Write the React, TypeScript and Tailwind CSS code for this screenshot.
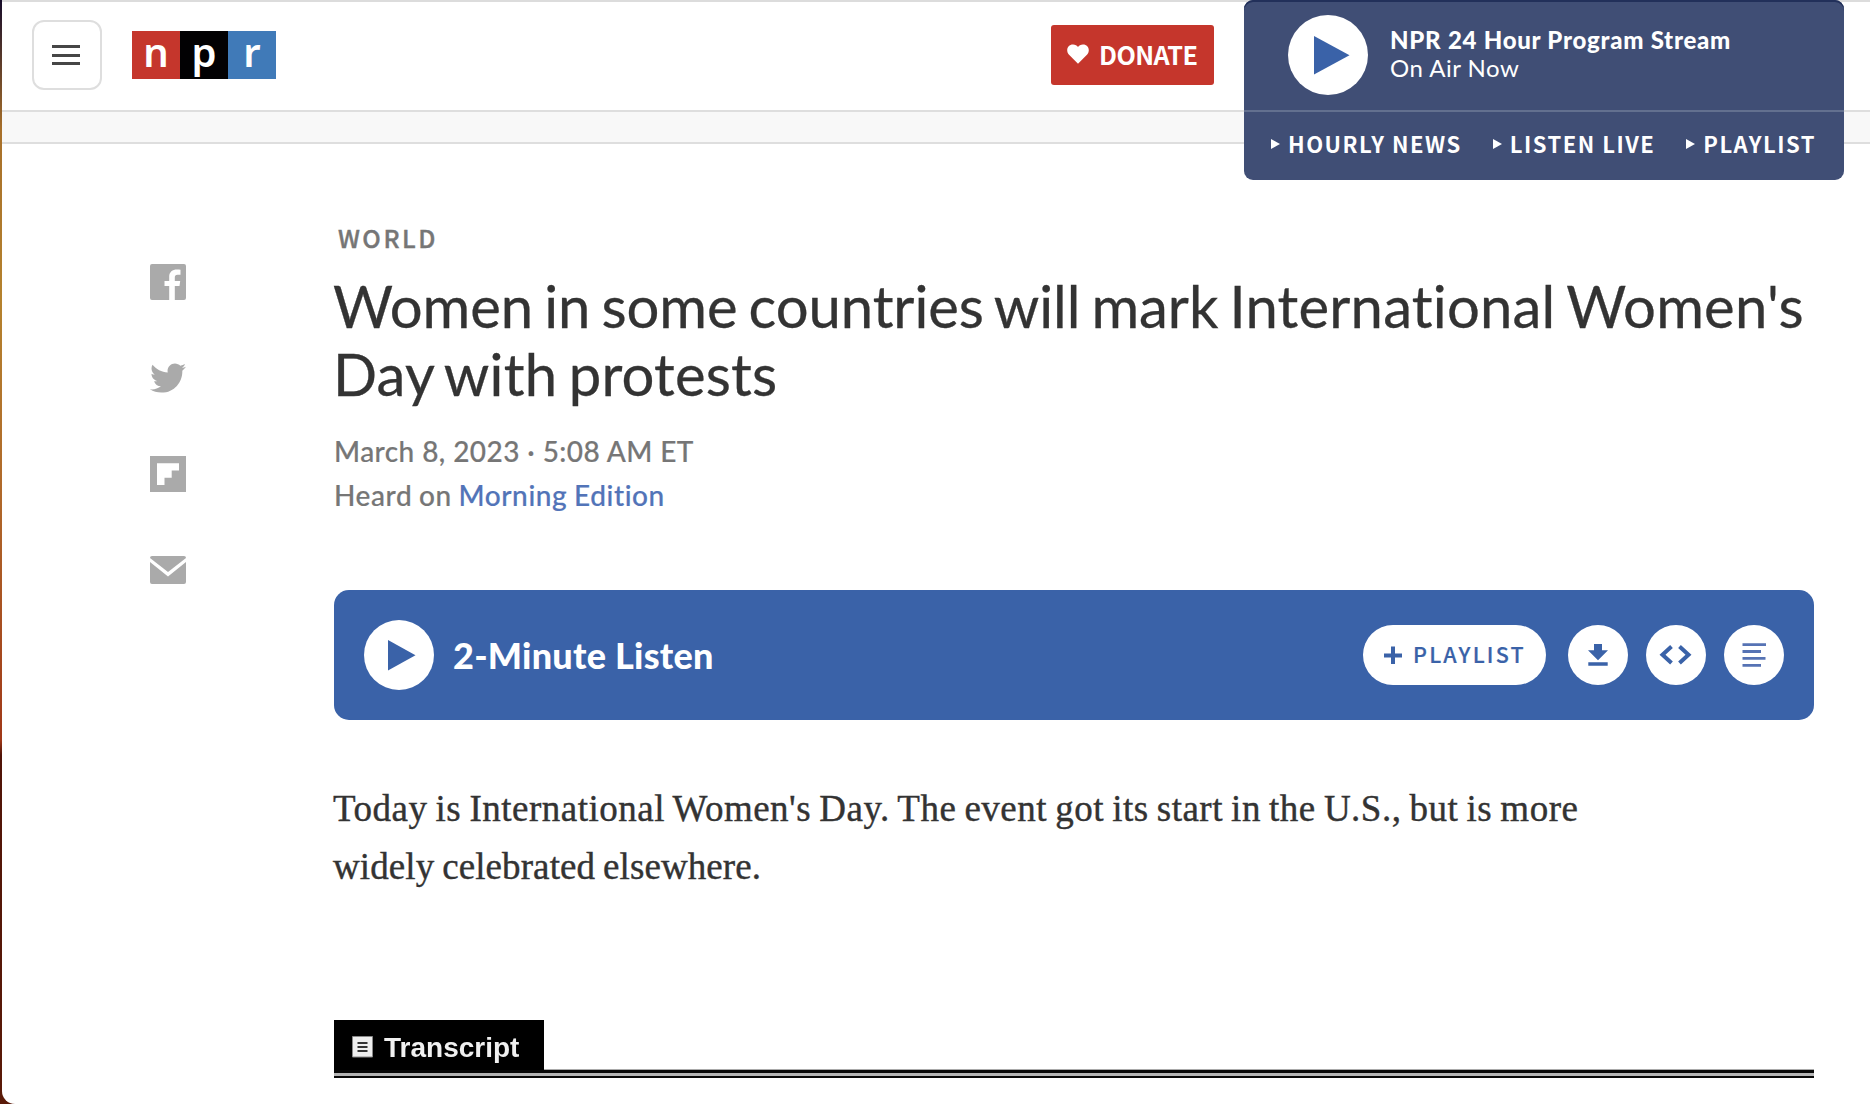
import React from "react";
import { FaTwitter } from "react-icons/fa";

const navLinks = ["HOURLY NEWS", "LISTEN LIVE", "PLAYLIST"];

const logoTiles = [
  { letter: "n", tile: "bg-[#c5362c]" },
  { letter: "p", tile: "bg-[#020103]" },
  { letter: "r", tile: "bg-[#407ab8]" },
];

function Logo() {
  return (
    <div className="ml-[30px] flex h-[48px] font-['Noto_Sans'] text-[40px] font-semibold leading-[48px] text-white">
      {logoTiles.map(({ letter, tile }) => (
        <span key={letter} className={`${tile} flex w-[48px] justify-center`}>
          <span className="relative top-[-3px]">{letter}</span>
        </span>
      ))}
    </div>
  );
}

function StreamPlayer() {
  return (
    <section className="absolute left-[1242px] top-0 h-[180px] w-[600px] overflow-hidden rounded-[9px] bg-[#404e75] text-white shadow-[inset_0_2px_0_#22305a]">
      <div className="flex h-[112px] items-start border-b-2 border-[#63708f] pl-[44px] pt-[15px]">
        <button className="size-[80px] rounded-full bg-white">
          <svg viewBox="0 0 80 80" className="size-[80px]">
            <path d="M26 21 L61.500 40.300 L26 59.500 Z" fill="#3a62a8" />
          </svg>
        </button>
        <div className="ml-[22px] pt-[11px] font-['Lato',sans-serif] text-[24px] leading-[28px]">
          <p className="font-black tracking-[0.75px]">NPR 24 Hour Program Stream</p>
          <p className="tracking-[0.5px]">On Air Now</p>
        </div>
      </div>
      <nav className="flex gap-[31px] whitespace-nowrap pl-[27px] pt-[15px] font-['Noto_Sans_CJK_SC',sans-serif] text-[22px] font-bold leading-[32px] tracking-[1.5px]">
        {navLinks.map((label) => (
          <a key={label} className="flex items-center">
            <svg viewBox="0 0 9 10" className="mr-[8px] mt-[1px] h-[10px] w-[9px]">
              <path d="M0 0 L9 5 L0 10 Z" fill="#fff" />
            </svg>
            {label}
          </a>
        ))}
      </nav>
    </section>
  );
}

function Header() {
  return (
    <header className="relative">
      <div className="flex h-[112px] items-center border-b-2 border-t-2 border-b-[#dedede] border-t-[#dcdcdc] pb-[2px] pl-[30px]">
        <button className="flex size-[70px] flex-col items-center justify-center gap-[5.500px] rounded-[12px] border-2 border-[#dedede] pr-[2px]">
          <span className="h-[3px] w-[28px] bg-[#464646]" />
          <span className="h-[3px] w-[28px] bg-[#464646]" />
          <span className="h-[3px] w-[28px] bg-[#464646]" />
        </button>
        <Logo />
        <button className="ml-[775px] flex h-[60px] w-[163px] items-center rounded-[3px] bg-[#c5362c] pb-[2px] pl-[16px] font-['Noto_Sans_CJK_SC',sans-serif] text-[25.2px] font-bold leading-[32px] tracking-[-0.55px] text-white">
          <svg viewBox="0 0 22 20" className="mr-[10px] h-[20px] w-[22px]">
            <path d="M11 19.800 L1.800 10.500 C-1.500 6.500 .5 .5 6 .5 C8.300 .5 10 1.500 11 3 C12 1.500 13.700 .5 16 .5 C21.500 .5 23.500 6.500 20.200 10.500 Z" fill="#fff" />
          </svg>
          DONATE
        </button>
      </div>
      <div className="h-[32px] border-b-2 border-[#dedede] bg-[#f8f8f8]" />
      <StreamPlayer />
    </header>
  );
}

function ShareRail() {
  return (
    <aside className="flex w-[332px] shrink-0 flex-col gap-[60px] pl-[148px] pt-[120px] text-[#aaaaaa]">
      <svg viewBox="0 0 36 36" className="size-[36px]">
        <path
          fill="currentColor"
          d="M2 0 H34 Q36 0 36 2 V34 Q36 36 34 36 H24.800 V22 H29.500 L30.200 17 H24.800 V13.500 C24.800 11.600 25.600 10.700 27.600 10.700 H30.500 V5.700 C29.500 5.500 28.500 5.400 27 5.400 C22.500 5.400 19.200 8 19.200 12.500 V17 H14.500 V22 H19.200 V36 H2 Q0 36 0 34 V2 Q0 0 2 0 Z"
        />
      </svg>
      <FaTwitter className="size-[36px]" />
      <svg viewBox="0 0 36 36" className="size-[36px]">
        <path fill="currentColor" fillRule="evenodd" d="M0 0 H36 V36 H0 Z M7 7.200 V29 H14.500 V21.800 H21.700 V14.500 H29 V7.200 Z" />
      </svg>
      <svg viewBox="0 0 36 36" className="size-[36px]">
        <path fill="currentColor" d="M2 4 H34 Q36 4 36 6 L18 20 L0 6 Q0 4 2 4 Z" />
        <path fill="currentColor" d="M0 10 L18 24.500 L36 10 V30 Q36 32 34 32 H2 Q0 32 0 30 Z" />
      </svg>
    </aside>
  );
}

function RoundButton({ children }: { children: React.ReactNode }) {
  return (
    <button className="size-[60px] rounded-full bg-white text-[#3a62a8]">
      <svg viewBox="0 0 60 60" className="size-[60px]">
        {children}
      </svg>
    </button>
  );
}

function AudioBar() {
  return (
    <section className="mt-[73px] flex h-[130px] w-[1480px] items-center rounded-[15px] bg-[#3a62a8] px-[30px]">
      <button className="size-[70px] rounded-full bg-white">
        <svg viewBox="0 0 70 70" className="size-[70px]">
          <path d="M24 20 L51.500 35.300 L24 50.500 Z" fill="#3a62a8" />
        </svg>
      </button>
      <h2 className="ml-[19px] font-['Lato',sans-serif] text-[36px] font-black leading-[44px] tracking-[0.25px] text-white">
        2-Minute Listen
      </h2>
      <div className="ml-auto flex items-center gap-[18px]">
        <button className="mr-[4px] flex h-[60px] w-[183px] items-center rounded-full bg-white pb-[2px] pl-[21px] font-['Noto_Sans_CJK_SC',sans-serif] text-[21.5px] font-medium leading-[32px] tracking-[2.2px] text-[#3a62a8] [-webkit-text-stroke:0.2px_#3a62a8]">
          <svg viewBox="0 0 18 18" className="mr-[11px] mt-[2px] size-[18px]">
            <path d="M7 0.500 H11 V7.500 H18 V11.500 H11 V18 H7 V11.500 H0 V7.500 H7 Z" fill="currentColor" />
          </svg>
          PLAYLIST
        </button>
        <RoundButton>
          <path fill="currentColor" d="M26 19 H34 V25.200 H40 L30 35.200 L20 25.200 H26 Z M20.300 37.300 H39.700 V40.800 H20.300 Z" />
        </RoundButton>
        <RoundButton>
          <path fill="none" stroke="currentColor" strokeWidth="4" d="M25.500 21.500 L16.500 29.700 L25.500 38 M33.500 21.500 L42.500 29.700 L33.500 38" />
        </RoundButton>
        <RoundButton>
          <path stroke="#5673b4" strokeWidth="2.800" d="M18.500 19.700 H42 M18.500 26.500 H37 M18.500 33.400 H41.500 M18.500 40.300 H37" />
        </RoundButton>
      </div>
    </section>
  );
}

function TranscriptHeading() {
  return (
    <div className="mt-[124px] w-[1480px]">
      <div className="flex h-[50px] items-end">
        <h3 className="flex h-[50px] w-[210px] items-center bg-black pl-[18px] pt-[6px] font-['Liberation_Sans',sans-serif] text-[28px] font-bold leading-[32px] text-[#f0f0f0]">
          <svg viewBox="0 0 22 22" className="mb-[2px] mr-[10px] size-[22px]">
            <path d="M0.500 0.500 H20.500 V21 H0.500 Z" fill="#eee" stroke="#888" />
            <path d="M5.500 7 H15.500 M5.500 11 H15.500 M5.500 15 H15.500" stroke="#333" strokeWidth="2" />
          </svg>
          <span className="blur-[0.5px]">Transcript</span>
        </h3>
        <div className="h-px flex-1 bg-[#aaa]" />
      </div>
      <div className="h-[8px] border-b-2 border-t-[3px] border-[#080808] bg-[#b5b5b5]" />
    </div>
  );
}

function Article() {
  return (
    <article className="flex flex-col pt-[82px]">
      <p className="ml-[4px] font-['Noto_Sans_CJK_SC',sans-serif] text-[24.5px] font-medium leading-[24px] tracking-[2.6px] text-[#767676] [-webkit-text-stroke:0.4px_#767676]">
        WORLD
      </p>
      <h1 className="-ml-px mt-[22px] w-[1500px] font-['Lato',sans-serif] text-[58px] leading-[68px] tracking-[-0.08px] text-[#333] [-webkit-text-stroke:0.3px_#333] [font-variant-ligatures:none] [word-spacing:-3.6px]">
        Women in some countries will mark{" "}
        <span className="tracking-[0.2px]">International Women's Day with protests</span>
      </h1>
      <div className="mt-[21px] font-['Lato',sans-serif] text-[28px] font-medium leading-[44px] text-[#767676] [-webkit-text-stroke:0.2px]">
        <p className="tracking-[0.43px]">March 8, 2023 · 5:08 AM ET</p>
        <p className="tracking-[0.6px] [word-spacing:-1px]">
          Heard on <a className="text-[#5274b8]">Morning Edition</a>
        </p>
      </div>
      <AudioBar />
      <div className="-ml-px mt-[60px] font-['Liberation_Serif',serif] text-[37px] leading-[58px] text-[#333] [-webkit-text-stroke:0.4px_#333]">
        <p className="tracking-[0.5px] [word-spacing:-1.6px]">
          Today is International Women's Day. The event got its start in the U.S., but is more
        </p>
        <p className="tracking-[0.1px] [word-spacing:-1.5px]">widely celebrated elsewhere.</p>
      </div>
      <TranscriptHeading />
    </article>
  );
}

export default function App() {
  return (
    <div className="h-[1104px] w-[1870px] overflow-hidden bg-[linear-gradient(#160c2a_0px,#a8702a_130px,#b5822e_300px,#b0682a_500px,#a03818_740px,#501408_755px,#5a1a08_1104px)] pl-[2px]">
      <div className="h-[1104px] overflow-hidden rounded-bl-[13px] bg-white">
        <Header />
        <main className="flex">
          <ShareRail />
          <Article />
        </main>
      </div>
    </div>
  );
}
